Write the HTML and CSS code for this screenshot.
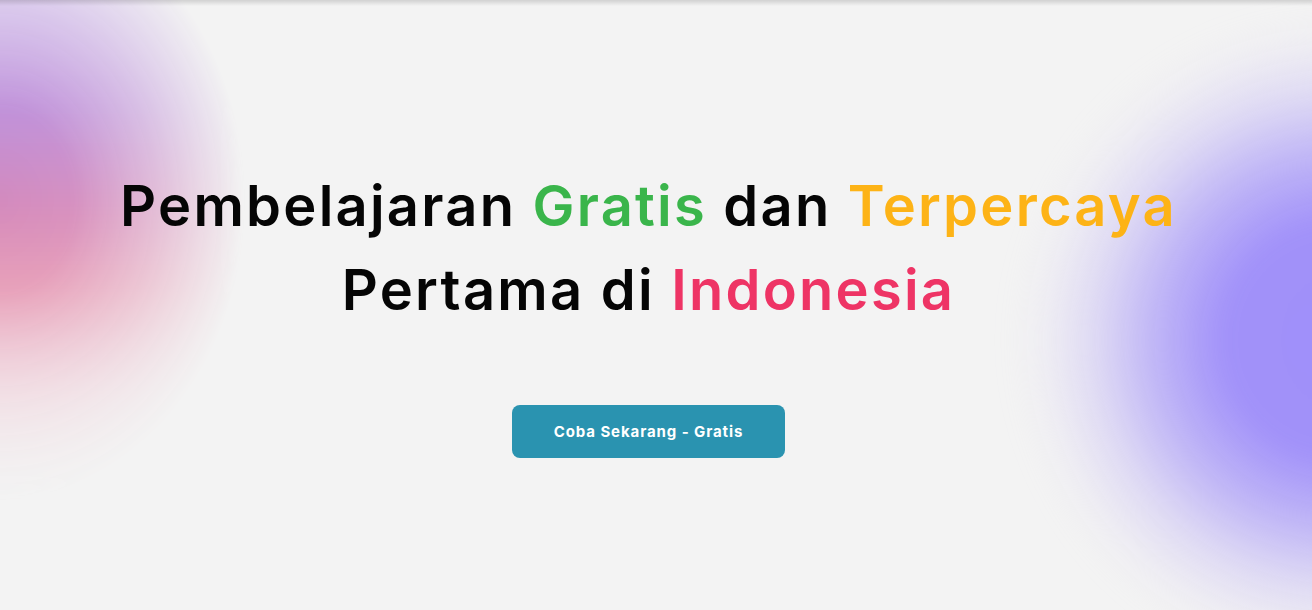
FILE: index.html
```html
<!DOCTYPE html>
<html lang="id">
<head>
<meta charset="utf-8">
<title>Pembelajaran Gratis</title>
<link rel="stylesheet" href="styles.css">
</head>
<body>
<main class="hero">
  <div class="blob blob-left"></div>
  <div class="blob blob-right"></div>
  <div class="hero-content">
    <h1 class="hero-title">Pembelajaran <span class="c-green">Gratis</span> dan <span class="c-orange">Terpercaya</span><br>Pertama di <span class="c-pink">Indonesia</span></h1>
    <a class="cta" href="#">Coba Sekarang - Gratis</a>
  </div>
</main>
</body>
</html>
```
FILE: styles.css
```css
* { box-sizing: border-box; }
html, body { margin: 0; padding: 0; }
body {
  background: #f3f3f3;
  font-family: "Inter", "Noto Sans", sans-serif;
  overflow: hidden;
}
.hero {
  position: relative;
  width: 100%;
  height: 610px;
  overflow: hidden;
  background: #f3f3f3;
}
.hero::after {
  content: "";
  position: absolute;
  left: 0;
  right: 0;
  top: 0;
  height: 6px;
  background: linear-gradient(to bottom, rgba(0,0,0,0.14), rgba(0,0,0,0));
  pointer-events: none;
}
.blob {
  position: absolute;
  pointer-events: none;
}
.blob-left {
  left: -245px;
  top: -100px;
  width: 490px;
  height: 600px;
  background: linear-gradient(to bottom, #cdb8f3 0%, #c2a0e6 18%, #bd8cd8 35%, #d68bbb 52%, #e79cb6 65%, #f0cbd7 82%, #f3e6ea 100%);
  -webkit-mask-image: radial-gradient(closest-side, #000 0%, rgba(0,0,0,0.95) 30%, rgba(0,0,0,0.5) 65%, rgba(0,0,0,0) 100%);
  mask-image: radial-gradient(closest-side, #000 0%, rgba(0,0,0,0.95) 30%, rgba(0,0,0,0.5) 65%, rgba(0,0,0,0) 100%);
  filter: blur(12px);
}
.blob-right {
  left: 1010px;
  top: 10px;
  width: 660px;
  height: 660px;
  background: radial-gradient(closest-side, rgba(160,144,250,1) 0%, rgba(161,145,249,1) 35%, rgba(176,163,247,0.8) 55%, rgba(200,190,245,0.45) 75%, rgba(220,212,244,0.15) 90%, rgba(220,212,244,0) 100%);
  filter: blur(12px);
}
.hero-content {
  position: relative;
  display: flex;
  flex-direction: column;
  align-items: center;
  padding-top: 164px;
  padding-right: 15px;
}
.hero-title {
  margin: 0;
  font-size: 56px;
  line-height: 84px;
  font-weight: 600;
  color: #050505;
  text-align: center;
  letter-spacing: 2.25px;
}
.c-green { color: #3ab54b; }
.c-orange { color: #fdb316; }
.c-pink { color: #ee3465; }
.cta {
  margin-top: 73px;
  display: flex;
  align-items: center;
  justify-content: center;
  width: 273px;
  height: 53px;
  border-radius: 8px;
  background: #2a93b0;
  color: #ffffff;
  font-size: 15px;
  font-weight: 700;
  letter-spacing: 0.9px;
  text-decoration: none;
}
```
